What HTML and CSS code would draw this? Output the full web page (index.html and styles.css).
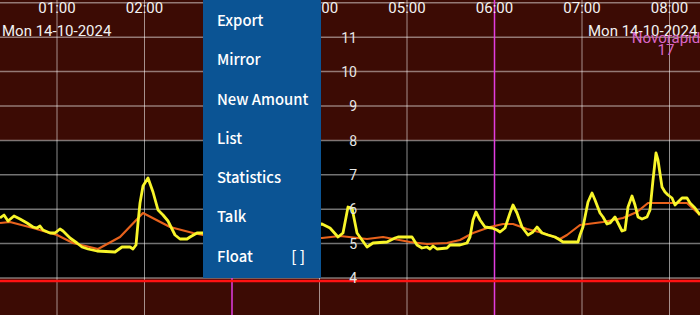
FILE: index.html
```html
<!DOCTYPE html>
<html lang="en">
<head>
    <meta charset="UTF-8">
    <meta name="viewport" content="width=device-width, initial-scale=1.0">
    <title>BG graph</title>
    <link rel="stylesheet" href="styles.css">
</head>
<body>
    <div class="chart">
        <svg class="graph" width="700" height="315" viewBox="0 0 700 315">
            <!-- target range band 4 - 8 -->
            <rect class="range" x="0" y="140.4" width="700" height="137.6"></rect>

            <g class="hgrid">
                <line x1="0" y1="2.8" x2="700" y2="2.8"></line>
                <line x1="0" y1="37.2" x2="700" y2="37.2"></line>
                <line x1="0" y1="71.6" x2="700" y2="71.6"></line>
                <line x1="0" y1="106" x2="700" y2="106"></line>
                <line x1="0" y1="140.4" x2="700" y2="140.4"></line>
                <line x1="0" y1="174.8" x2="700" y2="174.8"></line>
                <line x1="0" y1="209.2" x2="700" y2="209.2"></line>
                <line x1="0" y1="243.6" x2="700" y2="243.6"></line>
                <line x1="0" y1="278" x2="700" y2="278"></line>
            </g>

            <g class="vgrid">
                <line x1="57" y1="0" x2="57" y2="315"></line>
                <line x1="144.5" y1="0" x2="144.5" y2="315"></line>
                <line x1="319.5" y1="0" x2="319.5" y2="315"></line>
                <line x1="407" y1="0" x2="407" y2="315"></line>
                <line x1="582" y1="0" x2="582" y2="315"></line>
                <line x1="669.5" y1="0" x2="669.5" y2="315"></line>
            </g>

            <g class="marker">
                <line x1="232" y1="0" x2="232" y2="315"></line>
                <line x1="494.5" y1="0" x2="494.5" y2="315"></line>
            </g>

            <line class="low" x1="0" y1="281" x2="700" y2="281"></line>

            <polyline class="trend" points="0,223 10,222 33,228 57,235 73,243 98,249 120,237 143,213 170,227 193,233 203,235 260,237 322,238 340,236 367,239 383,237 410,242 427,244 447,243 460,240 473,233 490,227 503,224 513,224 527,229 543,233 560,239 567,235 580,225 603,222 623,218 637,212 648,203 687,203 700,215"></polyline>

            <polyline class="bg" points="0,218 4,215 8,221 14,216 20,219 27,223 33,227 37,228 40,226 43,230 50,233 55,233 60,229 63,231 70,238 77,243 82,247 88,249 97,251 115,252 122,247 130,247 133,249 136,245 138,223 140,203 143,186 148,178 153,192 158,210 163,215 168,221 175,235 180,239 187,239 190,237 197,233 203,233 260,230 322,224 330,228 338,237 343,233 348,207 352,208 357,233 367,247 373,243 387,242 395,238 398,237 412,237 417,245 422,248 427,247 430,249 433,246 437,249 447,248 450,245 460,245 467,243 470,237 473,220 476,212 480,220 485,227 492,228 497,230 500,232 505,228 510,213 513,205 517,213 522,227 528,235 533,232 537,227 542,233 548,235 555,237 560,240 563,242 578,242 580,235 583,227 588,202 592,193 595,200 600,213 603,217 607,224 610,223 615,217 618,223 622,231 625,230 628,207 632,196 635,205 638,217 642,219 647,217 650,210 653,180 656,153 658,160 662,187 665,192 668,195 672,198 675,205 678,202 682,198 687,198 690,203 695,208 700,215"></polyline>

            <g class="time">
                <text x="57" y="12.5">01:00</text>
                <text x="144.5" y="12.5">02:00</text>
                <text x="232" y="12.5">03:00</text>
                <text x="319.5" y="12.5">04:00</text>
                <text x="407" y="12.5">05:00</text>
                <text x="494.5" y="12.5">06:00</text>
                <text x="582" y="12.5">07:00</text>
                <text x="669.5" y="12.5">08:00</text>
            </g>

            <text class="date" x="2" y="36">Mon 14-10-2024</text>
            <text class="date" x="588" y="36">Mon 14-10-2024</text>

            <g class="treatment">
                <text x="666" y="42.5">Novorapid</text>
                <text x="666" y="55">17</text>
            </g>

            <g class="values">
                <text x="357" y="42.5">11</text>
                <text x="357" y="76.5">10</text>
                <text x="357" y="111">9</text>
                <text x="357" y="145.5">8</text>
                <text x="357" y="180">7</text>
                <text x="357" y="214">6</text>
                <text x="357" y="248.5">5</text>
                <text x="357" y="283">4</text>
            </g>
        </svg>

        <ul class="popup">
            <li>Export</li>
            <li>Mirror</li>
            <li>New Amount</li>
            <li>List</li>
            <li>Statistics</li>
            <li>Talk</li>
            <li class="check">Float <span>[ ]</span></li>
        </ul>
    </div>
</body>
</html>
```

FILE: styles.css
```css
body {
    margin: 0;
    background: #3c0b04;
    overflow: hidden;
}
.chart {
    position: relative;
    width: 700px;
    height: 315px;
}
.graph {
    display: block;
}
.range {
    fill: #000;
}
.hgrid line {
    stroke: rgba(255, 255, 255, 0.45);
    stroke-width: 1.5;
}
.vgrid line {
    stroke: rgba(255, 255, 255, 0.55);
    stroke-width: 1;
}
.marker line {
    stroke: #e23de0;
    stroke-width: 1.5;
}
.low {
    stroke: #ff1212;
    stroke-width: 2.5;
}
.bg {
    fill: none;
    stroke: #f8f52a;
    stroke-width: 2.8;
    stroke-linejoin: round;
}
.trend {
    fill: none;
    stroke: #e8621c;
    stroke-width: 2.2;
    stroke-linejoin: round;
}
.graph text {
    font-family: Roboto, "Liberation Sans", sans-serif;
    font-size: 15px;
    fill: #f2f2f2;
}
.time text {
    text-anchor: middle;
}
.treatment text {
    text-anchor: middle;
    fill: #d966c6;
}
.values text {
    text-anchor: end;
    font-size: 14px;
    fill: #e6e6e6;
}
.popup {
    position: absolute;
    top: 0;
    left: 203px;
    width: 118px;
    height: 278px;
    margin: 0;
    padding: 0;
    box-sizing: border-box;
    list-style: none;
    background: #0b5494;
    font-family: "Noto Sans CJK SC", "Noto Sans", sans-serif;
    font-weight: 500;
    font-size: 14.8px;
    color: #fff;
}
.popup li {
    height: 39.3px;
    line-height: 39.3px;
    padding-left: 14px;
    padding-right: 16px;
    white-space: nowrap;
}
.popup .check {
    display: flex;
    justify-content: space-between;
}
```
